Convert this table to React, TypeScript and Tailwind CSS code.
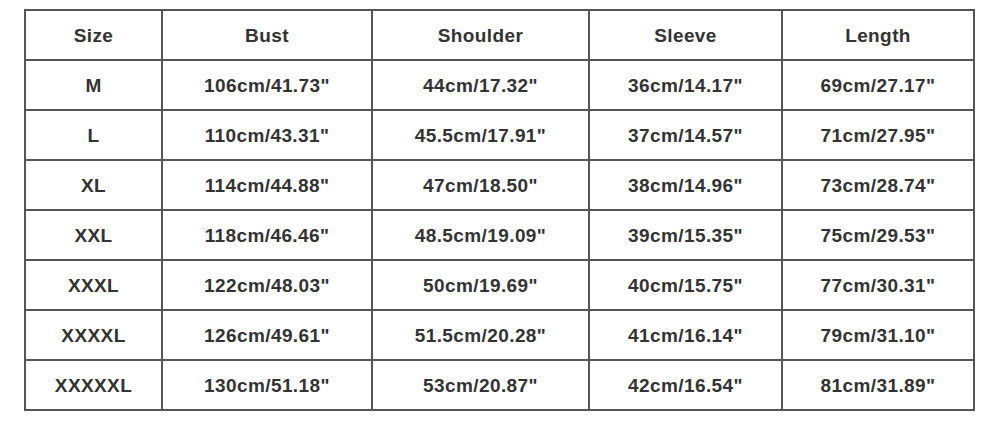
import React from "react";

const header = ["Size", "Bust", "Shoulder", "Sleeve", "Length"];
const rows = [
  ["M", '106cm/41.73"', '44cm/17.32"', '36cm/14.17"', '69cm/27.17"'],
  ["L", '110cm/43.31"', '45.5cm/17.91"', '37cm/14.57"', '71cm/27.95"'],
  ["XL", '114cm/44.88"', '47cm/18.50"', '38cm/14.96"', '73cm/28.74"'],
  ["XXL", '118cm/46.46"', '48.5cm/19.09"', '39cm/15.35"', '75cm/29.53"'],
  ["XXXL", '122cm/48.03"', '50cm/19.69"', '40cm/15.75"', '77cm/30.31"'],
  ["XXXXL", '126cm/49.61"', '51.5cm/20.28"', '41cm/16.14"', '79cm/31.10"'],
  ["XXXXXL", '130cm/51.18"', '53cm/20.87"', '42cm/16.54"', '81cm/31.89"'],
];

export default function App() {
  return (
    <div
      className="w-[1000px] h-[421px] bg-white pt-[9px] pl-[24px]"
      style={{ fontFamily: '"Liberation Sans", Arial, sans-serif' }}
    >
      <table className="table-fixed border-collapse w-[949px] text-[19px] font-bold text-[#333333] tracking-[0.4px]">
        <colgroup>
          <col className="w-[137px]" />
          <col className="w-[210px]" />
          <col className="w-[217px]" />
          <col className="w-[193px]" />
          <col className="w-[192px]" />
        </colgroup>
        <tbody>
          <tr className="h-[50px]">
            {header.map((h) => (
              <td key={h} className="border-2 border-[#555555] text-center align-middle p-0 pt-[2px]">
                {h}
              </td>
            ))}
          </tr>
          {rows.map((r) => (
            <tr key={r[0]} className="h-[50px]">
              {r.map((c, i) => (
                <td key={i} className="border-2 border-[#555555] text-center align-middle p-0 pt-[2px]">
                  {c}
                </td>
              ))}
            </tr>
          ))}
        </tbody>
      </table>
    </div>
  );
}
